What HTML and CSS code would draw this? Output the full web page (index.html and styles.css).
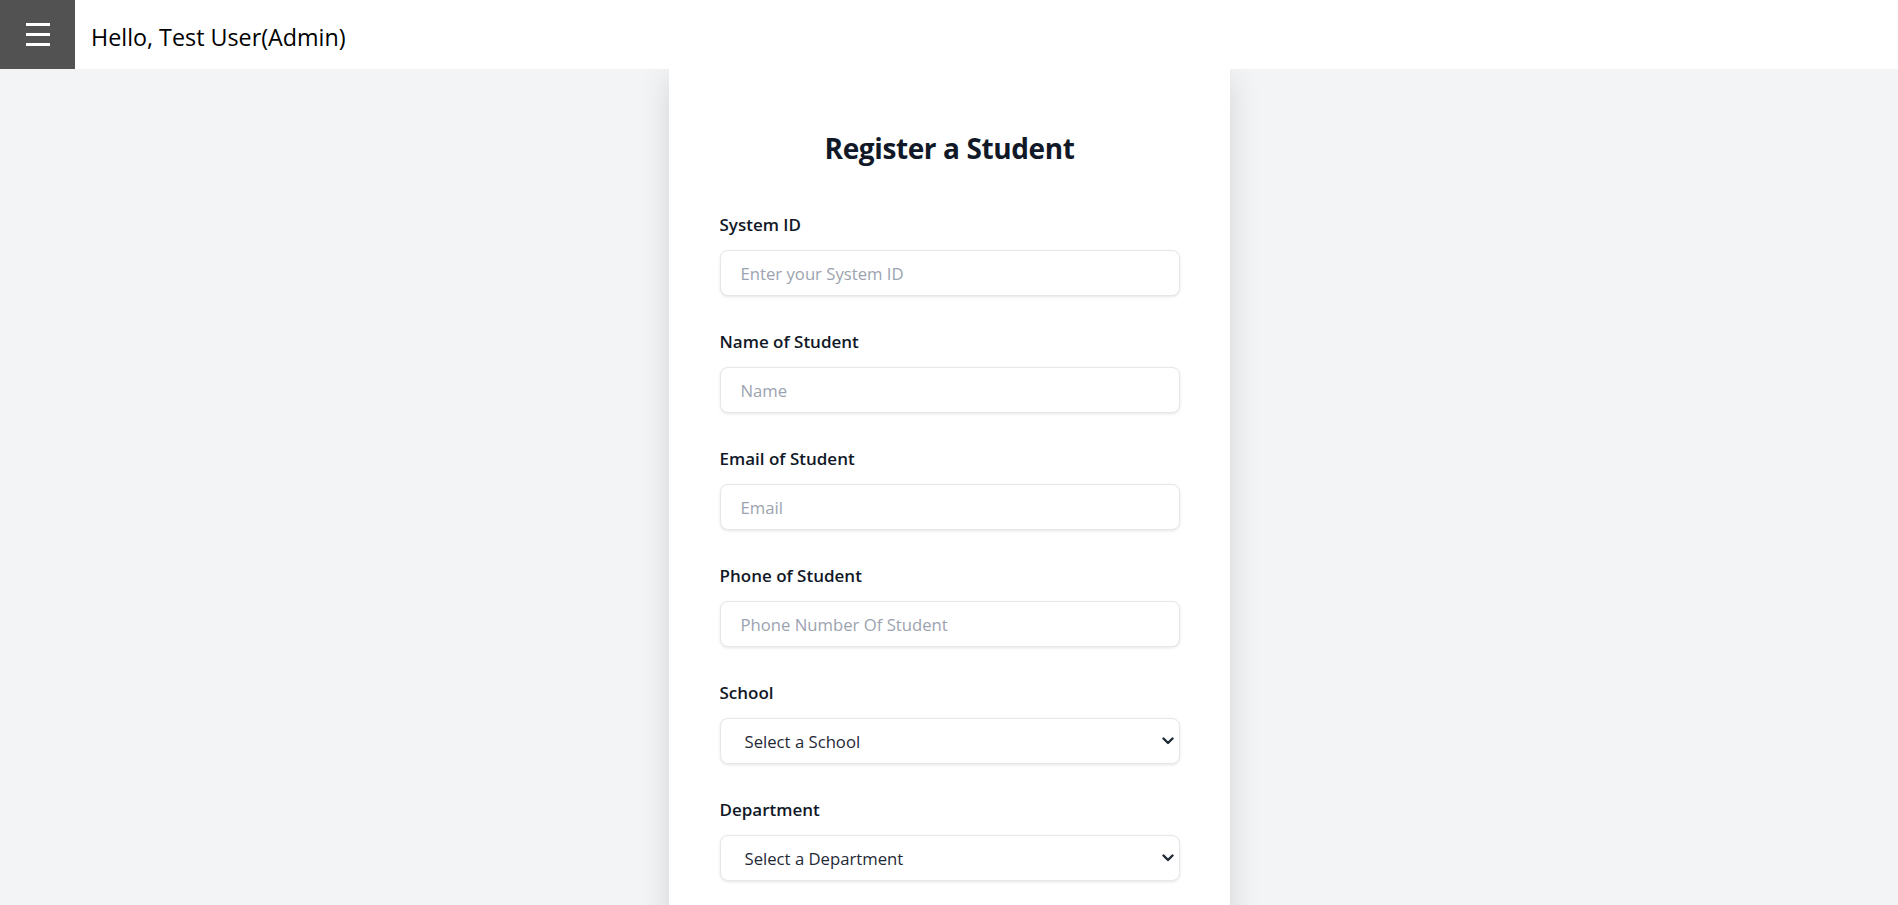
FILE: index.html
```html
<!DOCTYPE html>
<html lang="en">
<head>
<meta charset="utf-8">
<title>Register a Student</title>
<link rel="stylesheet" href="styles.css">
</head>
<body>
<header class="topbar">
  <button class="menu-btn" type="button" aria-label="Menu">
    <span class="bar"></span><span class="bar"></span><span class="bar"></span>
  </button>
  <div class="greeting">Hello, Test User(Admin)</div>
</header>
<main class="page">
  <form class="card">
    <h1 class="title">Register a Student</h1>
    <div class="field">
      <label class="label">System ID</label>
      <input class="control" type="text" placeholder="Enter your System ID">
    </div>
    <div class="field">
      <label class="label">Name of Student</label>
      <input class="control" type="text" placeholder="Name">
    </div>
    <div class="field">
      <label class="label">Email of Student</label>
      <input class="control" type="text" placeholder="Email">
    </div>
    <div class="field">
      <label class="label">Phone of Student</label>
      <input class="control" type="text" placeholder="Phone Number Of Student">
    </div>
    <div class="field">
      <label class="label">School</label>
      <div class="select-wrap">
        <select class="control select"><option>Select a School</option></select>
        <svg class="chevron" width="12" height="8" viewBox="0 0 12 8"><polyline points="1.5,1.5 6,6 10.5,1.5" fill="none" stroke="#1f2937" stroke-width="2.4" stroke-linecap="round" stroke-linejoin="round"/></svg>
      </div>
    </div>
    <div class="field">
      <label class="label">Department</label>
      <div class="select-wrap">
        <select class="control select"><option>Select a Department</option></select>
        <svg class="chevron" width="12" height="8" viewBox="0 0 12 8"><polyline points="1.5,1.5 6,6 10.5,1.5" fill="none" stroke="#1f2937" stroke-width="2.4" stroke-linecap="round" stroke-linejoin="round"/></svg>
      </div>
    </div>
  </form>
</main>
</body>
</html>
```
FILE: styles.css
```css
* { box-sizing: border-box; }
html, body { margin: 0; padding: 0; }
body {
  background: #f3f4f6;
  font-family: "Open Sans", "Noto Sans", sans-serif;
  color: #111827;
  min-height: 905px;
}
.topbar {
  position: relative;
  z-index: 1;
  display: flex;
  align-items: center;
  height: 69px;
  background: #ffffff;
}
.menu-btn {
  width: 75px;
  height: 69px;
  background: #525252;
  border: 0;
  padding: 0;
  display: flex;
  flex-direction: column;
  align-items: center;
  justify-content: center;
  gap: 7.5px;
}
.bar {
  display: block;
  width: 24px;
  height: 2.5px;
  background: #ffffff;
}
.greeting {
  padding-left: 16px;
  padding-top: 4px;
  font-size: 23.3px;
  color: #000000;
  line-height: 32px;
}
.page {
  display: flex;
  justify-content: center;
}
.card {
  width: 561px;
  min-height: 900px;
  background: #ffffff;
  padding: 61px 50px 40px 51px;
  box-shadow: 0 8px 30px rgba(0, 0, 0, 0.13);
}
.title {
  margin: 0 0 45px;
  font-size: 28px;
  line-height: 36px;
  font-weight: 700;
  letter-spacing: -0.4px;
  text-align: center;
  color: #111827;
}
.field {
  display: flex;
  flex-direction: column;
  margin-bottom: 32px;
}
.label {
  font-size: 17px;
  line-height: 28px;
  font-weight: 600;
  color: #111827;
  margin-bottom: 11px;
}
.control {
  width: 100%;
  height: 46px;
  border: 1px solid #e5e7eb;
  border-radius: 8px;
  background: #ffffff;
  box-shadow: 0 1px 3px rgba(0, 0, 0, 0.1);
  padding: 0 20px;
  font-family: "Open Sans", "Noto Sans", sans-serif;
  font-size: 16.7px;
  color: #111827;
  outline: none;
}
.control::placeholder { color: #9ca3af; }
.select-wrap { position: relative; }
.select {
  appearance: none;
  -webkit-appearance: none;
  padding-left: 24px;
  color: #1f2937;
}
.chevron {
  position: absolute;
  right: 6px;
  top: 19px;
  pointer-events: none;
}
```
